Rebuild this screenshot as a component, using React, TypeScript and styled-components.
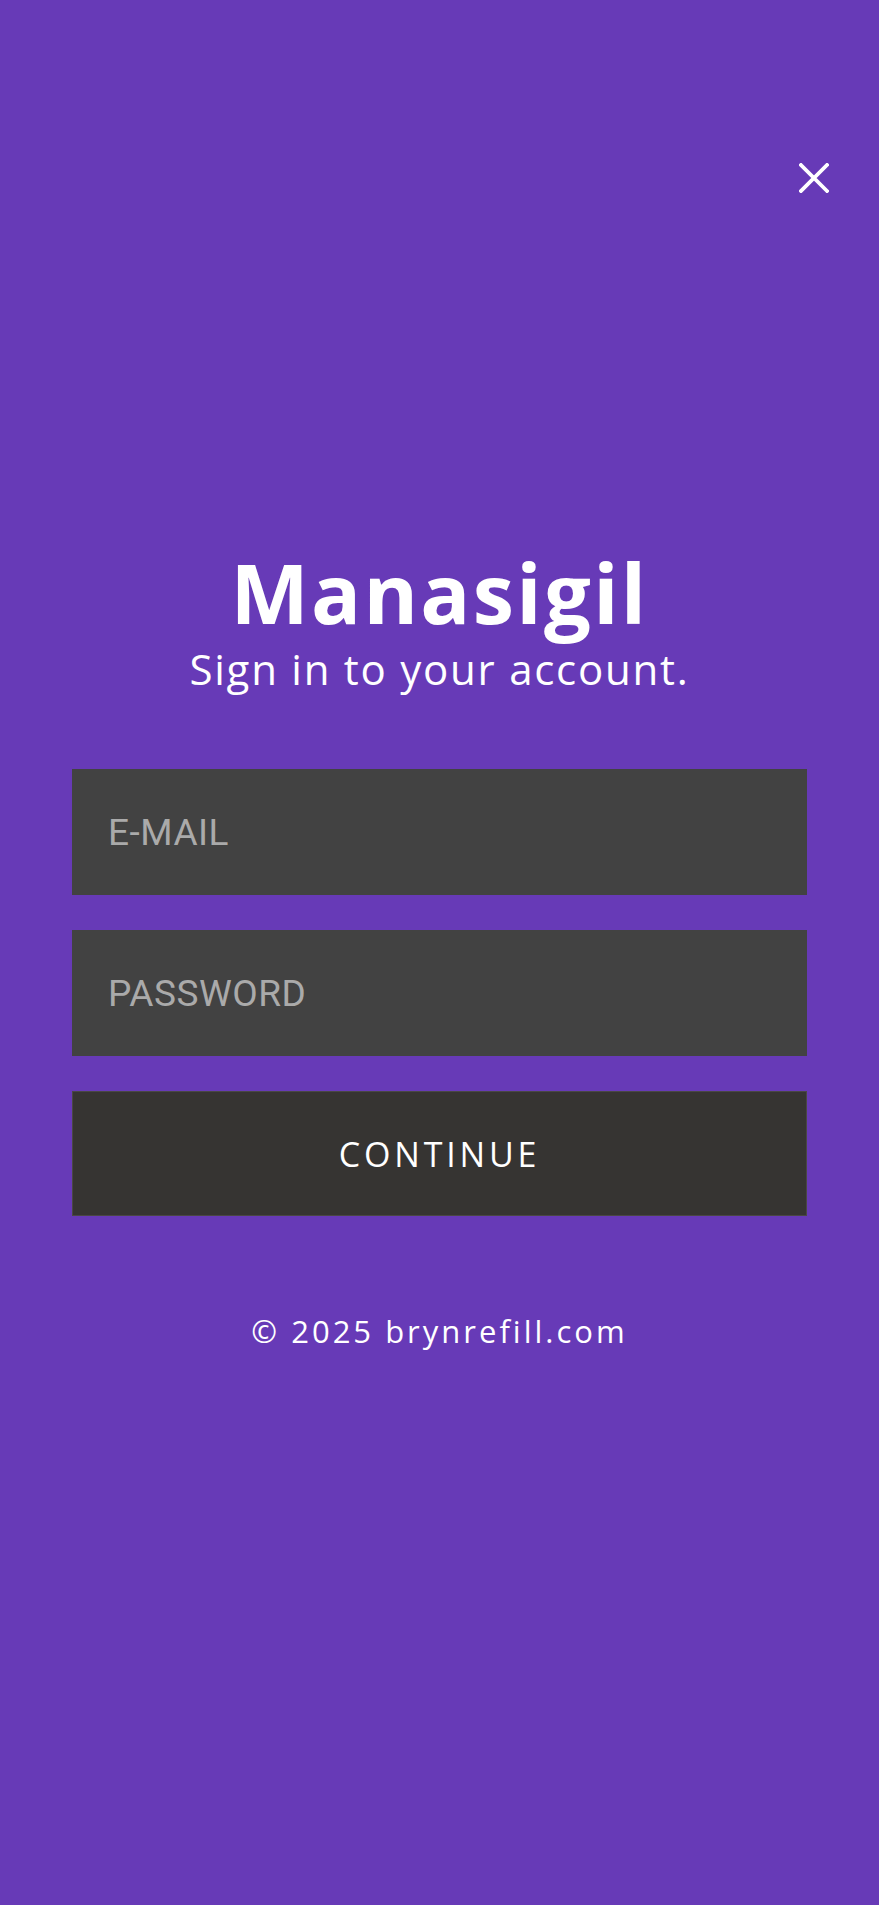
import React, { useState } from "react";
import styled, { createGlobalStyle } from "styled-components";

const GlobalStyle = createGlobalStyle`
  html, body {
    margin: 0;
    padding: 0;
    background: #673ab7;
  }
  * {
    box-sizing: border-box;
  }
`;

const Page = styled.div`
  position: relative;
  min-height: 100vh;
  background: #673ab7;
  display: flex;
  flex-direction: column;
  align-items: center;
  justify-content: center;
  font-family: "Open Sans", "Liberation Sans", sans-serif;
  color: #ffffff;
`;

const CloseButton = styled.button`
  position: absolute;
  top: 163px;
  right: 50px;
  width: 30px;
  height: 30px;
  padding: 0;
  border: none;
  background: transparent;
  cursor: pointer;
  display: flex;
  align-items: center;
  justify-content: center;
`;

const Form = styled.form`
  width: 735px;
  display: flex;
  flex-direction: column;
  align-items: stretch;
`;

const Title = styled.h1`
  margin: 0;
  font-size: 83px;
  line-height: 1.2;
  font-weight: 700;
  text-align: center;
  letter-spacing: 2.3px;
`;

const Subtitle = styled.p`
  margin: 2px 0 75px;
  font-size: 42px;
  line-height: 1.2;
  font-weight: 400;
  text-align: center;
  letter-spacing: 1.75px;
`;

const Field = styled.input`
  height: 126px;
  margin-bottom: 35px;
  padding: 0 36px;
  border: none;
  outline: none;
  background: #424242;
  color: #e0e0e0;
  font-family: Roboto, "Liberation Sans", sans-serif;
  font-size: 37px;
  letter-spacing: 0.5px;

  &::placeholder {
    color: #aaaaaa;
    text-transform: uppercase;
  }
`;

const Submit = styled.button`
  height: 125px;
  border: 1px solid #4a4745;
  background: #363432;
  color: #ffffff;
  font-family: "Open Sans", "Liberation Sans", sans-serif;
  font-size: 34px;
  letter-spacing: 3.8px;
  cursor: pointer;
`;

const Footer = styled.p`
  margin: 97px 0 12px;
  font-size: 31px;
  line-height: 1.2;
  text-align: center;
  letter-spacing: 3px;
`;

const App: React.FC = () => {
  const [email, setEmail] = useState("");
  const [password, setPassword] = useState("");

  return (
    <Page>
      <GlobalStyle />
      <CloseButton type="button" aria-label="Close">
        <svg width="30" height="30" viewBox="0 0 30 30">
          <path
            d="M2 2 L28 28 M28 2 L2 28"
            stroke="#ffffff"
            strokeWidth="3.8"
            strokeLinecap="square"
          />
        </svg>
      </CloseButton>
      <Form onSubmit={(e) => e.preventDefault()}>
        <Title>Manasigil</Title>
        <Subtitle>Sign in to your account.</Subtitle>
        <Field
          type="email"
          placeholder="E-mail"
          value={email}
          onChange={(e) => setEmail(e.target.value)}
        />
        <Field
          type="password"
          placeholder="Password"
          value={password}
          onChange={(e) => setPassword(e.target.value)}
        />
        <Submit type="submit">CONTINUE</Submit>
        <Footer>© 2025 brynrefill.com</Footer>
      </Form>
    </Page>
  );
};

export default App;
